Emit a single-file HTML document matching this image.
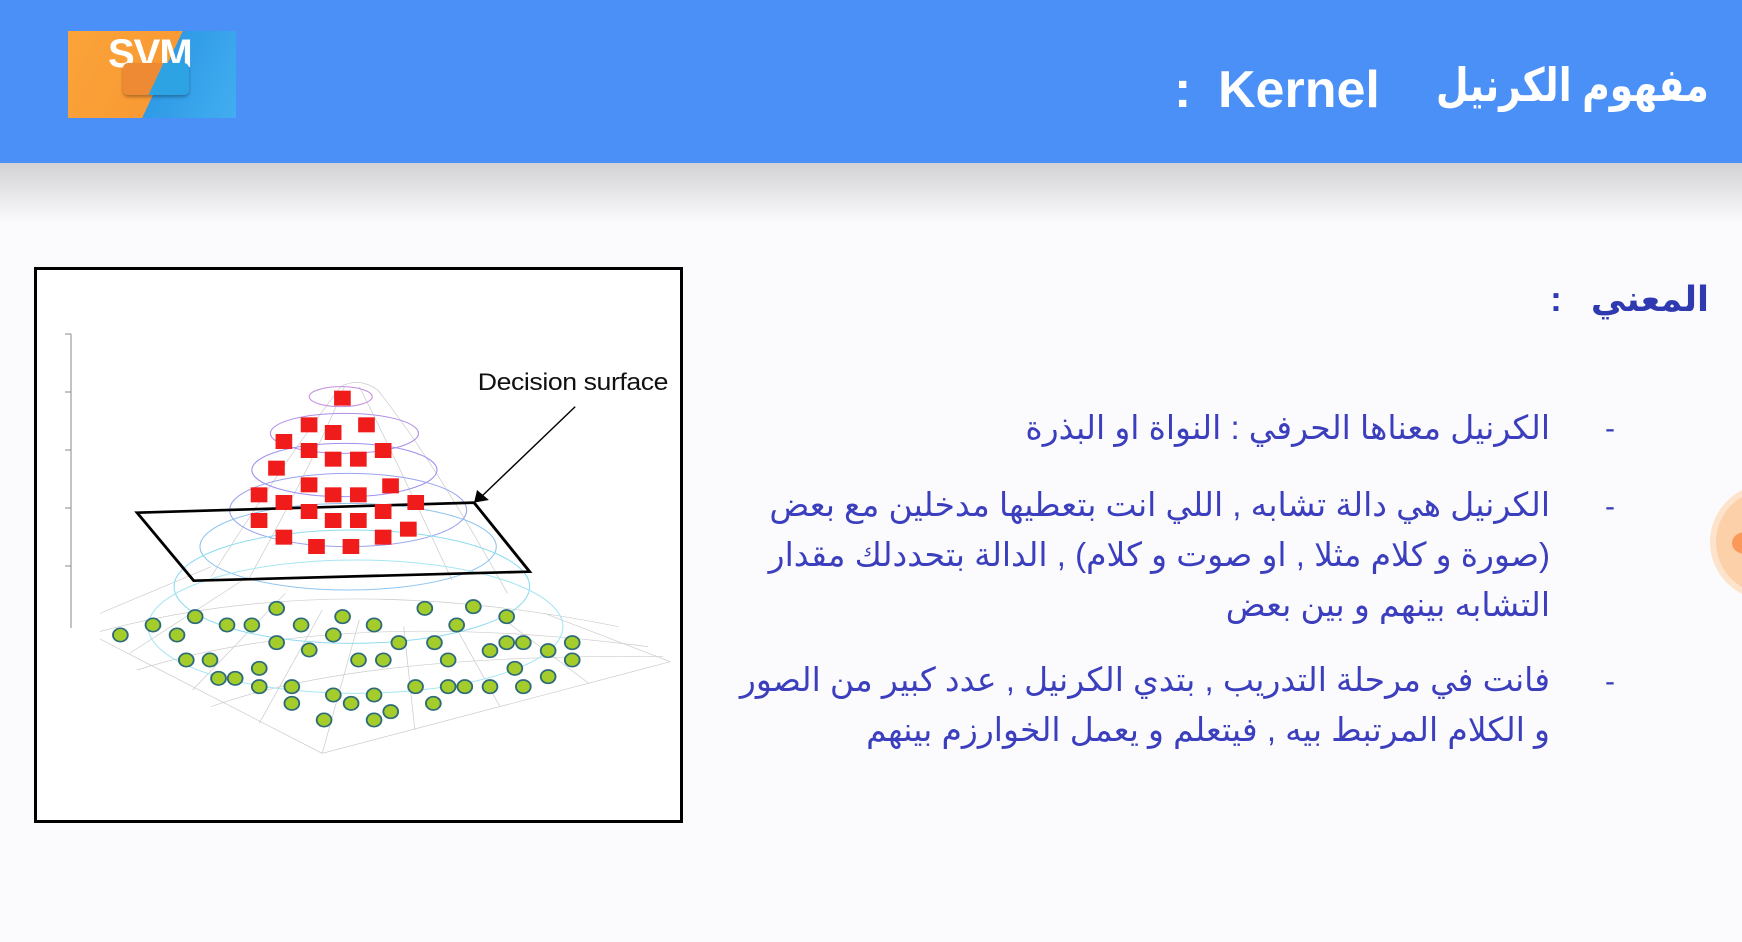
<!DOCTYPE html>
<html><head><meta charset="utf-8"><style>
html,body{margin:0;padding:0;width:1742px;height:942px;overflow:hidden;background:#fbfbfd;font-family:"Liberation Sans","DejaVu Sans",sans-serif}
.hdr{position:absolute;left:0;top:0;width:1742px;height:163px;background:#4a90f6}
.shadow{position:absolute;left:0;top:163px;width:1742px;height:60px;background:linear-gradient(#d2d2d4,#fbfbfd)}
.t{position:absolute;color:#fff;font-weight:bold;font-size:52px;white-space:nowrap;line-height:1}
.ar{position:absolute;direction:rtl;white-space:nowrap;color:#3b3fbd;font-size:33px;line-height:50px;text-align:right}
.dash{position:absolute;color:#3b3fbd;font-size:30px}
</style></head><body>
<div class="hdr"></div>
<div class="shadow"></div>
<!-- logo -->
<div style="position:absolute;left:68px;top:31px;width:168px;height:87px;background:linear-gradient(115deg,#fba33a 0,#f99a33 55%,#2f9ae6 55%,#42aef0 100%)"></div>
<div style="position:absolute;left:108px;top:32px;color:#fff;font-weight:bold;font-size:40px;letter-spacing:-1px">SVM</div>
<div style="position:absolute;left:123px;top:63px;width:66px;height:32px;border-radius:5px;background:linear-gradient(115deg,#ee8a33 0,#ee8a33 50%,#2ea3e3 50%);box-shadow:0 2px 3px rgba(0,0,0,.3)"></div>
<!-- title -->
<div class="t" style="right:33px;top:62px;direction:rtl;font-size:46px;transform:scaleX(0.82);transform-origin:right center">مفهوم الكرنيل</div>
<div class="t" style="left:1218px;top:64px">Kernel</div>
<div class="t" style="left:1174px;top:64px">:</div>
<!-- image box -->
<div style="position:absolute;left:34px;top:267px;width:643px;height:550px;border:3px solid #000;background:#fff"></div>
<svg style="position:absolute;left:0;top:0" width="1742" height="942">
<g stroke="#888" stroke-width="1" fill="none">
<line x1="71" y1="334" x2="71" y2="628"/>
<line x1="65" y1="334" x2="71" y2="334"/><line x1="65" y1="392" x2="71" y2="392"/><line x1="65" y1="450" x2="71" y2="450"/><line x1="65" y1="508" x2="71" y2="508"/><line x1="65" y1="566" x2="71" y2="566"/>
</g>
<svg x="100" y="360" width="580" height="420" viewBox="0 0 1566 1260" preserveAspectRatio="none">
<g fill="none" stroke="#ccc" stroke-width="2">
<path d="M-100 780 L600 1180 L1540 905"/>
<path d="M0 760 L300 620 M80 880 L400 650 M250 990 L500 700 M430 1090 L600 750 M600 1180 L700 780 M850 1110 L820 800 M1080 1040 L950 780 M1320 970 L1080 770 M1540 905 L1200 760"/>
<path d="M-50 830 Q600 620 1400 800 M100 930 Q650 740 1480 860 M300 1040 Q700 880 1520 890"/>
<path d="M300 650 Q500 300 650 80 Q700 50 750 90 Q900 300 1100 700 M400 660 Q580 300 660 80 M950 660 Q800 300 700 80"/>
</g>
<g fill="none" stroke-width="3">
<ellipse cx="650" cy="110" rx="85" ry="30" stroke="#c58ee0"/>
<ellipse cx="660" cy="220" rx="200" ry="60" stroke="#b08ee8"/>
<ellipse cx="660" cy="330" rx="250" ry="80" stroke="#a090ee"/>
<ellipse cx="670" cy="450" rx="320" ry="110" stroke="#9aa4ee"/>
<ellipse cx="670" cy="560" rx="400" ry="130" stroke="#8fc4ee"/>
<ellipse cx="680" cy="680" rx="480" ry="170" stroke="#8fdcee"/>
<ellipse cx="690" cy="800" rx="560" ry="200" stroke="#a6e6f2"/>
</g>
<polygon points="100,458 1010,428 1160,635 253,662" fill="none" stroke="#000" stroke-width="8"/>
<line x1="1283" y1="140" x2="1025" y2="415" stroke="#000" stroke-width="4"/>
<polygon points="1010,428 1018,390 1050,420" fill="#000"/>
<text x="1020" y="90" font-size="72" font-family="Liberation Sans,sans-serif" fill="#111" textLength="515">Decision surface</text>
<g fill="#f01c1c">
<rect x="632" y="92" width="45" height="45"/><rect x="542" y="172" width="45" height="45"/><rect x="697" y="172" width="45" height="45"/><rect x="607" y="195" width="45" height="45"/><rect x="474" y="222" width="45" height="45"/><rect x="542" y="249" width="45" height="45"/><rect x="742" y="249" width="45" height="45"/><rect x="607" y="275" width="45" height="45"/><rect x="675" y="275" width="45" height="45"/><rect x="454" y="302" width="45" height="45"/><rect x="542" y="352" width="45" height="45"/><rect x="762" y="355" width="45" height="45"/><rect x="407" y="382" width="45" height="45"/><rect x="474" y="405" width="45" height="45"/><rect x="607" y="382" width="45" height="45"/><rect x="675" y="382" width="45" height="45"/><rect x="830" y="405" width="45" height="45"/><rect x="542" y="432" width="45" height="45"/><rect x="742" y="432" width="45" height="45"/><rect x="407" y="459" width="45" height="45"/><rect x="607" y="459" width="45" height="45"/><rect x="675" y="459" width="45" height="45"/><rect x="810" y="485" width="45" height="45"/><rect x="474" y="509" width="45" height="45"/><rect x="742" y="509" width="45" height="45"/><rect x="562" y="537" width="45" height="45"/><rect x="655" y="537" width="45" height="45"/>
</g>
<g fill="#a4cc2a" stroke="#2d6a7a" stroke-width="5">
<circle cx="55" cy="825" r="20"/><circle cx="143" cy="795" r="20"/><circle cx="208" cy="825" r="20"/><circle cx="257" cy="770" r="20"/><circle cx="343" cy="795" r="20"/><circle cx="410" cy="795" r="20"/><circle cx="477" cy="745" r="20"/><circle cx="477" cy="848" r="20"/><circle cx="543" cy="795" r="20"/><circle cx="565" cy="870" r="20"/><circle cx="630" cy="825" r="20"/><circle cx="655" cy="770" r="20"/><circle cx="740" cy="795" r="20"/><circle cx="698" cy="900" r="20"/><circle cx="765" cy="900" r="20"/><circle cx="807" cy="848" r="20"/><circle cx="877" cy="745" r="20"/><circle cx="903" cy="848" r="20"/><circle cx="940" cy="900" r="20"/><circle cx="963" cy="795" r="20"/><circle cx="1008" cy="740" r="20"/><circle cx="1098" cy="770" r="20"/><circle cx="1053" cy="872" r="20"/><circle cx="1098" cy="848" r="20"/><circle cx="1143" cy="848" r="20"/><circle cx="1210" cy="872" r="20"/><circle cx="1275" cy="848" r="20"/><circle cx="1275" cy="900" r="20"/><circle cx="233" cy="900" r="20"/><circle cx="297" cy="900" r="20"/><circle cx="320" cy="955" r="20"/><circle cx="365" cy="955" r="20"/><circle cx="430" cy="925" r="20"/><circle cx="430" cy="980" r="20"/><circle cx="518" cy="980" r="20"/><circle cx="518" cy="1030" r="20"/><circle cx="630" cy="1005" r="20"/><circle cx="678" cy="1030" r="20"/><circle cx="740" cy="1005" r="20"/><circle cx="605" cy="1080" r="20"/><circle cx="740" cy="1080" r="20"/><circle cx="785" cy="1055" r="20"/><circle cx="852" cy="980" r="20"/><circle cx="900" cy="1030" r="20"/><circle cx="940" cy="980" r="20"/><circle cx="985" cy="980" r="20"/><circle cx="1053" cy="980" r="20"/><circle cx="1120" cy="925" r="20"/><circle cx="1143" cy="980" r="20"/><circle cx="1210" cy="950" r="20"/>
</g>
</svg>
</svg>
<!-- content -->
<div class="ar" style="right:33px;top:275px;font-size:35px;font-weight:bold;color:#2f3ab0;line-height:50px">المعني &nbsp;&nbsp;:</div>
<div class="dash" style="left:1605px;top:412px">-</div>
<div class="dash" style="left:1605px;top:490px">-</div>
<div class="dash" style="left:1605px;top:665px">-</div>
<div class="ar" style="right:192px;top:403px">الكرنيل معناها الحرفي : النواة او البذرة</div>
<div class="ar" style="right:192px;top:480px">الكرنيل هي دالة تشابه , اللي انت بتعطيها مدخلين مع بعض<br>(صورة و كلام مثلا , او صوت و كلام) , الدالة بتحددلك مقدار<br>التشابه بينهم و بين بعض</div>
<div class="ar" style="right:192px;top:655px">فانت في مرحلة التدريب , بتدي الكرنيل , عدد كبير من الصور<br>و الكلام المرتبط بيه , فيتعلم و يعمل الخوارزم بينهم</div>
<!-- orange circle -->
<div style="position:absolute;left:1716px;top:490px;width:104px;height:104px;border-radius:50%;background:#fcd0a8;box-shadow:0 0 0 6px #fde3cc"></div>
<div style="position:absolute;left:1732px;top:532px;width:26px;height:22px;border-radius:50%;background:#f99a5a"></div>
</body></html>
